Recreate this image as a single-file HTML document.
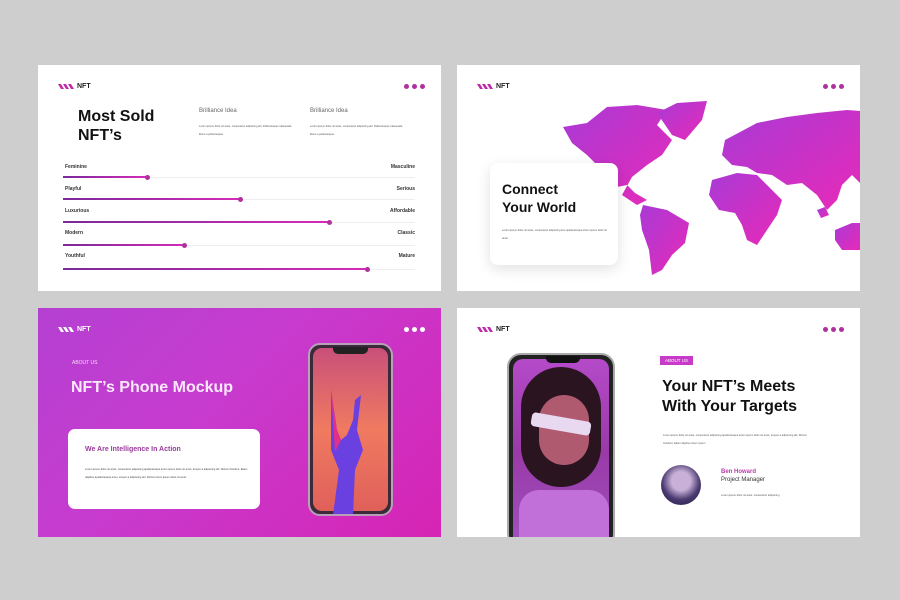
<!DOCTYPE html>
<html><head><meta charset="utf-8"><style>
*{margin:0;padding:0;box-sizing:border-box}
body{width:900px;height:600px;background:#cecece;position:relative;overflow:hidden;font-family:"Liberation Sans",sans-serif}
.s{position:absolute;background:#fff;overflow:hidden}
.a{position:absolute}
.logo{position:absolute;font-size:7px;font-weight:bold;color:#222}
.dots{position:absolute;display:flex;gap:3px}
.dots i{width:5px;height:5px;border-radius:50%;background:#b0309e;display:block}
.t{position:absolute;font-size:2.6px;color:#555;line-height:8px}
.lab{position:absolute;font-size:5px;color:#333;font-weight:bold}
.bar{position:absolute;left:25px;width:352px;height:1px;background:#eee}
.fill{position:absolute;left:25px;height:2px;background:linear-gradient(90deg,#7a2a9a,#d52bb8)}
.knob{position:absolute;width:5px;height:5px;border-radius:50%;background:#b0309e}
</style></head><body>

<!-- TL -->
<div class="s" style="left:38px;top:65px;width:403px;height:226px">
 <svg class="a" style="left:20px;top:18px" width="16" height="7"><path d="M0 1h3l3 5h-3zM5 1h3l3 5h-3zM10 1h3l3 5h-3z" fill="#c02aa8"/></svg>
 <div class="logo" style="left:39px;top:18px">NFT</div>
 <div class="dots" style="left:366px;top:19px"><i></i><i></i><i></i></div>
 <div class="a" style="left:40px;top:42px;font-size:16px;font-weight:bold;line-height:19px;color:#111">Most Sold<br>NFT’s</div>
 <div class="a" style="left:161px;top:43px;font-size:6px;color:#666">Brilliance Idea</div>
 <div class="t" style="left:161px;top:58px;width:95px">Lorem ipsum dolor sit amet, consectetur adipiscing elit. Pellentesque malesuada libero a pellentesque.</div>
 <div class="a" style="left:272px;top:43px;font-size:6px;color:#666">Brilliance Idea</div>
 <div class="t" style="left:272px;top:58px;width:95px">Lorem ipsum dolor sit amet, consectetur adipiscing elit. Pellentesque malesuada libero a pellentesque.</div>

 <div class="lab" style="left:27px;top:99px">Feminine</div><div class="lab" style="right:26px;top:99px">Masculine</div>
 <div class="bar" style="top:112px"></div><div class="fill" style="top:111px;width:84px"></div><div class="knob" style="left:107px;top:110px"></div>
 <div class="lab" style="left:27px;top:121px">Playful</div><div class="lab" style="right:26px;top:121px">Serious</div>
 <div class="bar" style="top:134px"></div><div class="fill" style="top:133px;width:177px"></div><div class="knob" style="left:200px;top:132px"></div>
 <div class="lab" style="left:27px;top:143px">Luxurious</div><div class="lab" style="right:26px;top:143px">Affordable</div>
 <div class="bar" style="top:157px"></div><div class="fill" style="top:156px;width:266px"></div><div class="knob" style="left:289px;top:155px"></div>
 <div class="lab" style="left:27px;top:165px">Modern</div><div class="lab" style="right:26px;top:165px">Classic</div>
 <div class="bar" style="top:180px"></div><div class="fill" style="top:179px;width:121px"></div><div class="knob" style="left:144px;top:178px"></div>
 <div class="lab" style="left:27px;top:188px">Youthful</div><div class="lab" style="right:26px;top:188px">Mature</div>
 <div class="bar" style="top:204px"></div><div class="fill" style="top:203px;width:304px"></div><div class="knob" style="left:327px;top:202px"></div>
</div>

<!-- TR -->
<div class="s" style="left:457px;top:65px;width:403px;height:226px">
 <svg class="a" style="left:20px;top:18px" width="16" height="7"><path d="M0 1h3l3 5h-3zM5 1h3l3 5h-3zM10 1h3l3 5h-3z" fill="#c02aa8"/></svg>
 <div class="logo" style="left:39px;top:18px">NFT</div>
 <div class="dots" style="left:366px;top:19px"><i></i><i></i><i></i></div>
 <svg class="a" style="left:0;top:0" width="403" height="226">
  <defs><linearGradient id="m" x1="0" y1="0" x2="1" y2="1"><stop offset="0" stop-color="#a83ad6"/><stop offset="1" stop-color="#e82ab8"/></linearGradient></defs>
  <g fill="url(#m)">
   <path d="M106 62 L130 58 L150 42 L180 40 L210 45 L200 60 L215 75 L205 90 L190 100 L175 112 L165 130 L180 140 L190 135 L178 128 L170 120 L160 122 L150 115 L140 100 L130 90 L115 78 Z"/>
   <path d="M200 48 L220 38 L250 36 L245 55 L228 75 L215 70 Z"/>
   <path d="M186 140 L210 145 L232 158 L228 178 L215 190 L205 205 L195 210 L192 185 L185 165 L183 150 Z"/>
   <path d="M268 75 L300 58 L330 52 L360 48 L390 45 L403 46 L403 118 L395 110 L385 120 L380 135 L370 145 L360 130 L345 118 L330 120 L315 110 L300 108 L290 102 L275 100 L265 90 Z"/>
   <path d="M255 115 L280 108 L300 110 L315 125 L325 135 L320 150 L310 165 L300 180 L290 175 L285 160 L278 148 L262 145 L252 130 Z"/>
   <path d="M378 165 L395 158 L403 158 L403 185 L385 185 L378 175 Z"/>
   <path d="M360 145 L368 142 L372 150 L364 153 Z"/>
  </g>
 </svg>
 <div class="a" style="left:33px;top:98px;width:128px;height:102px;background:#fff;border-radius:8px;box-shadow:0 4px 14px rgba(0,0,0,.12)"></div>
 <div class="a" style="left:45px;top:115px;font-size:14px;font-weight:bold;line-height:18px;color:#111">Connect<br>Your World</div>
 <div class="t" style="left:45px;top:162px;width:105px">Lorem ipsum dolor sit amet, consectetur adipiscing lore apellentesque lorem ipsum dolor sit amet.</div>
</div>

<!-- BL -->
<div class="s" style="left:38px;top:308px;width:403px;height:229px;background:linear-gradient(135deg,#b440d2 0%,#c63ccf 40%,#d624b4 100%)">
 <svg class="a" style="left:20px;top:18px" width="16" height="7"><path d="M0 1h3l3 5h-3zM5 1h3l3 5h-3zM10 1h3l3 5h-3z" fill="#fff"/></svg>
 <div class="logo" style="left:39px;top:18px;color:#fff">NFT</div>
 <div class="dots" style="left:366px;top:19px"><i style="background:#fff"></i><i style="background:#fff"></i><i style="background:#fff"></i></div>
 <div class="a" style="left:34px;top:52px;font-size:5px;color:#f5d8f5">ABOUT US</div>
 <div class="a" style="left:33px;top:71px;font-size:16px;font-weight:bold;color:#fbe8fb">NFT’s Phone Mockup</div>
 <div class="a" style="left:30px;top:121px;width:192px;height:80px;background:#fff;border-radius:7px"></div>
 <div class="a" style="left:47px;top:138px;font-size:7px;font-weight:bold;color:#9a3a9a">We Are Intelligence In Action</div>
 <div class="t" style="left:47px;top:158px;width:163px;color:#444">Lorem ipsum dolor sit amet, consectetur adipiscing apellentesque lorem ipsum dolor sit amet, tempor a adipiscing elit. Dictum tincidunt. Etiam dapibus apellentesque amet, tempor a adipiscing elit. Dictum lorem ipsum dolor sit amet.</div>
 <div class="a" style="left:270px;top:35px;width:85px;height:173px;border-radius:12px;background:#3a2a3a;border:2px solid #b8a0b8;overflow:hidden">
  <div class="a" style="left:3px;top:3px;right:3px;bottom:3px;border-radius:9px;background:linear-gradient(180deg,#c8507a,#f07a60 50%,#e0605a)"></div>
  <div class="a" style="left:23px;top:2px;width:35px;height:7px;background:#222;border-radius:0 0 5px 5px"></div>
  <svg class="a" style="left:15px;top:45px" width="50" height="125"><path d="M6 0 L12 40 L16 50 L22 45 L28 30 L30 10 L36 5 L32 40 L38 60 L30 80 L28 125 L8 125 L14 80 L6 60 Z" fill="#6a40e0"/><path d="M6 0 L12 40 L16 50 L10 62 Z" fill="#e0308a"/></svg>
 </div>
</div>

<!-- BR -->
<div class="s" style="left:457px;top:308px;width:403px;height:229px">
 <svg class="a" style="left:20px;top:18px" width="16" height="7"><path d="M0 1h3l3 5h-3zM5 1h3l3 5h-3zM10 1h3l3 5h-3z" fill="#c02aa8"/></svg>
 <div class="logo" style="left:39px;top:18px">NFT</div>
 <div class="dots" style="left:366px;top:19px"><i></i><i></i><i></i></div>
 <div class="a" style="left:50px;top:45px;width:108px;height:195px;border-radius:14px;background:#222;border:2px solid #aaa;overflow:hidden">
  <div class="a" style="left:4px;top:4px;right:4px;bottom:0;border-radius:10px 10px 0 0;background:linear-gradient(180deg,#b44ac8,#9a3aa8 50%,#a050c0)"></div>
  <div class="a" style="left:12px;top:12px;width:80px;height:120px;border-radius:40px;background:#2a1420"></div>
  <div class="a" style="left:30px;top:40px;width:50px;height:70px;border-radius:25px;background:#b05a70"></div>
  <div class="a" style="left:22px;top:62px;width:60px;height:14px;border-radius:4px;background:#e8d8f0;transform:rotate(10deg)"></div>
  <div class="a" style="left:10px;top:135px;width:90px;height:60px;border-radius:20px 20px 0 0;background:#c070d8"></div>
  <div class="a" style="left:37px;top:1px;width:34px;height:7px;background:#111;border-radius:0 0 5px 5px"></div>
 </div>
 <div class="a" style="left:203px;top:48px;width:33px;height:9px;background:#c83ac8;color:#fff;font-size:4.5px;line-height:9px;text-align:center">ABOUT US</div>
 <div class="a" style="left:205px;top:69px;font-size:16px;font-weight:bold;line-height:20px;color:#111">Your NFT’s Meets<br>With Your Targets</div>
 <div class="t" style="left:206px;top:124px;width:150px">Lorem ipsum dolor sit amet, consectetur adipiscing apellentesque lorem ipsum dolor sit amet, tempor a adipiscing elit. Dictum tincidunt. Etiam dapibus lorem ipsum</div>
 <div class="a" style="left:204px;top:157px;width:40px;height:40px;border-radius:50%;background:radial-gradient(circle at 50% 40%,#c8b0d8 0 30%,#4a3a70 60%,#1a1a40)"></div>
 <div class="a" style="left:264px;top:161px;font-size:6px;font-weight:bold;color:#b83aa8">Ben Howard</div>
 <div class="a" style="left:264px;top:169px;font-size:6px;color:#333">Project Manager</div>
 <div class="t" style="left:264px;top:184px">Lorem ipsum dolor sit amet, consectetur adipiscing</div>
</div>
</body></html>
